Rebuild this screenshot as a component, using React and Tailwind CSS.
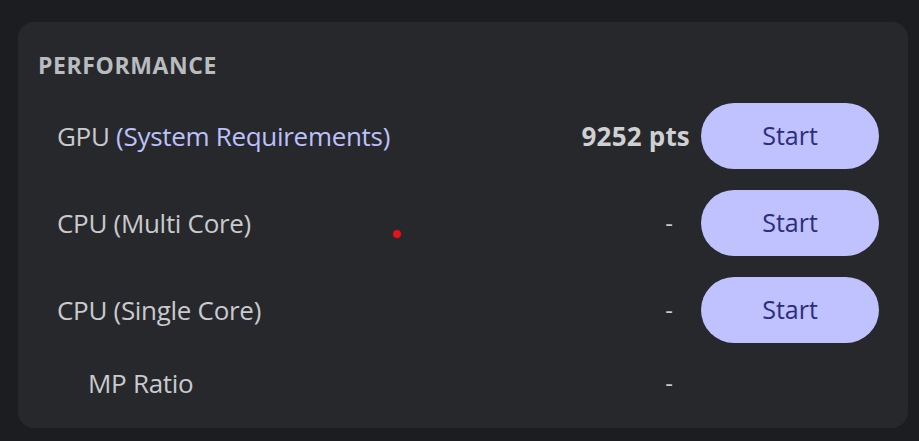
import React from "react";

const rows = [
    { name: "GPU", note: "(System Requirements)", value: "9252 pts", button: true },
    { name: "CPU (Multi Core)", value: "-", button: true },
    { name: "CPU (Single Core)", value: "-", button: true },
];

function Row({ name, note, value, button }) {
    const isDash = value === "-";
    return (
        <div className="grid grid-cols-[1fr_auto_178px] items-center gap-[11px] h-[66px]">
            <div className="pl-[19px] text-[26px] tracking-[-0.3px] text-[#c9cacd]">
                {name}
                {note && <span className="text-[#bcc0fb]"> {note}</span>}
            </div>
            <div
                className={
                    isDash
                        ? "text-[24px] text-[#c9cacd] pr-[17px]"
                        : "text-[26px] font-bold tracking-[0.2px] text-[#cfd0d2]"
                }
            >
                {value}
            </div>
            {button ? (
                <button className="h-[66px] rounded-full bg-[#c0c1ff] text-[25px] text-[#2b2e7a]">
                    Start
                </button>
            ) : (
                <div />
            )}
        </div>
    );
}

export default function App() {
    return (
        <div className="w-[919px] h-[441px] bg-[#1c1d20] pt-[22px] pl-[18px] pr-[11px] font-['Open_Sans','Noto_Sans',sans-serif]">
            <div className="relative h-[406px] rounded-[16px] bg-[#27282c] pl-[20px] pr-[29px] pt-[32px]">
                <div className="text-[23px] font-bold leading-none tracking-[0.6px] text-[#b9bcbf]">
                    PERFORMANCE
                </div>
                <div className="mt-[26px] flex flex-col gap-[21px]">
                    {rows.map((r) => (
                        <Row key={r.name} {...r} />
                    ))}
                    <div className="grid grid-cols-[1fr_auto_178px] items-center gap-[11px] h-[40px] -mt-[1px]">
                        <div className="pl-[50px] text-[26px] tracking-[-0.3px] text-[#c9cacd]">MP Ratio</div>
                        <div className="text-[24px] text-[#c9cacd] pr-[17px]">-</div>
                        <div />
                    </div>
                </div>
                <span className="absolute left-[375px] top-[208px] h-[8px] w-[8px] rounded-full bg-[#e5121a]" />
            </div>
        </div>
    );
}
